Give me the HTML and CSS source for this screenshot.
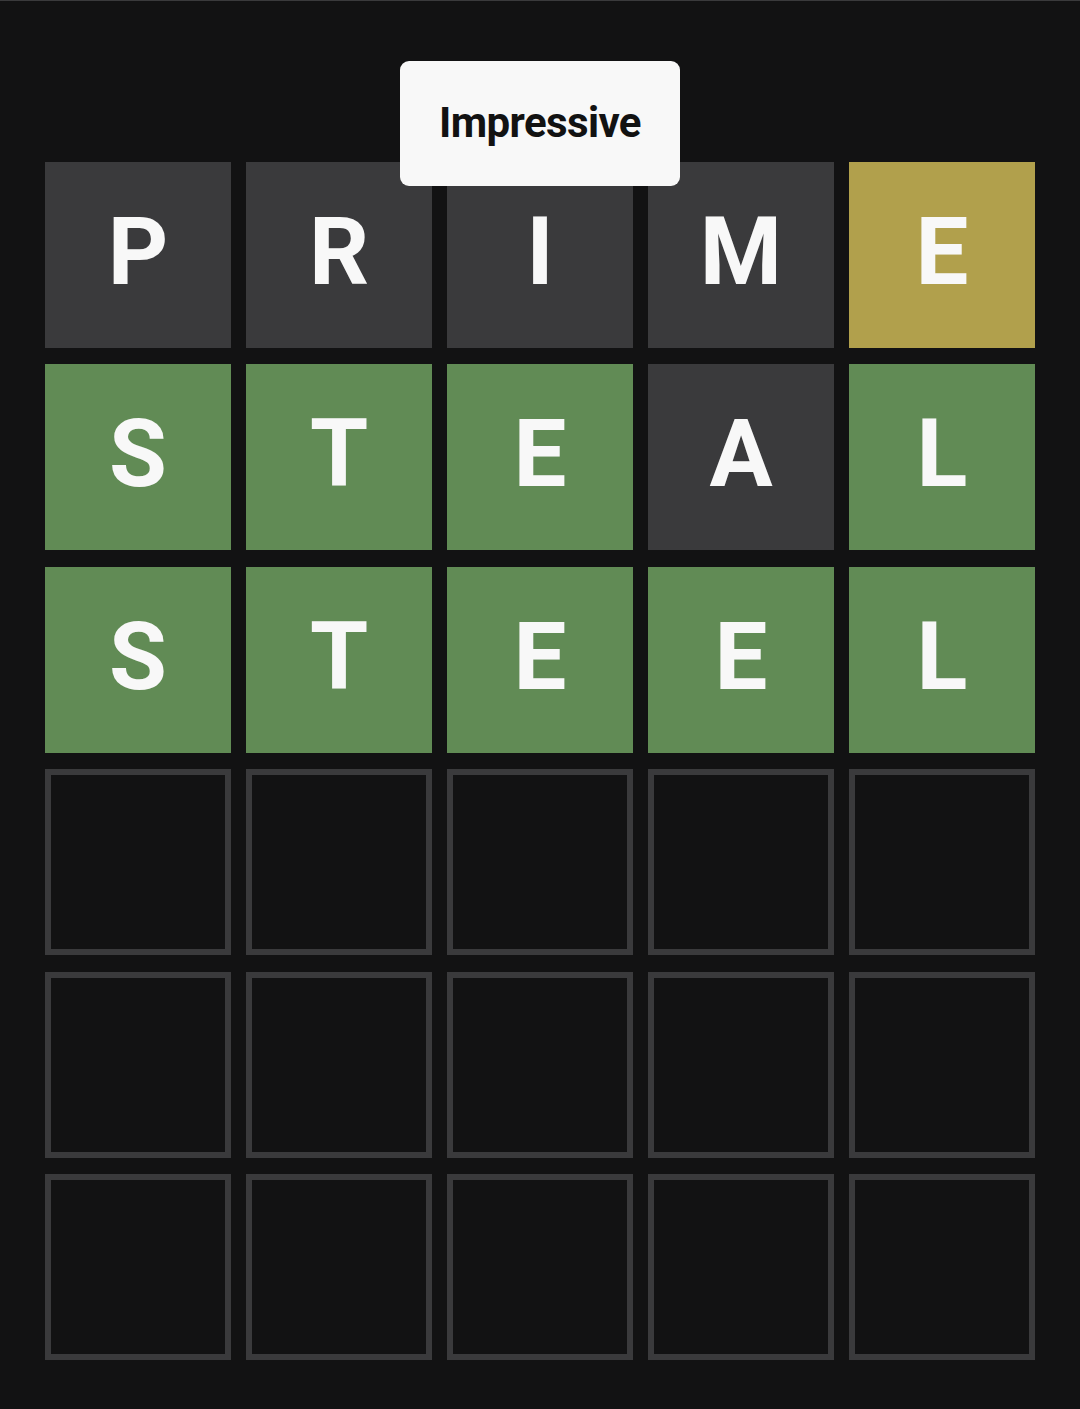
FILE: index.html
```html
<!DOCTYPE html>
<html lang="en">
<head>
<meta charset="utf-8">
<title>Wordle</title>
<link rel="stylesheet" href="styles.css">
</head>
<body>
<main class="page">
  <div class="toast">Impressive</div>
  <div class="board">
    <div class="tile absent">P</div>
    <div class="tile absent">R</div>
    <div class="tile absent">I</div>
    <div class="tile absent">M</div>
    <div class="tile present">E</div>

    <div class="tile correct">S</div>
    <div class="tile correct">T</div>
    <div class="tile correct">E</div>
    <div class="tile absent">A</div>
    <div class="tile correct">L</div>

    <div class="tile correct">S</div>
    <div class="tile correct">T</div>
    <div class="tile correct">E</div>
    <div class="tile correct">E</div>
    <div class="tile correct">L</div>

    <div class="tile empty"></div>
    <div class="tile empty"></div>
    <div class="tile empty"></div>
    <div class="tile empty"></div>
    <div class="tile empty"></div>

    <div class="tile empty"></div>
    <div class="tile empty"></div>
    <div class="tile empty"></div>
    <div class="tile empty"></div>
    <div class="tile empty"></div>

    <div class="tile empty"></div>
    <div class="tile empty"></div>
    <div class="tile empty"></div>
    <div class="tile empty"></div>
    <div class="tile empty"></div>
  </div>
</main>
</body>
</html>
```

FILE: styles.css
```css
html, body {
  margin: 0;
  padding: 0;
  background: #121213;
}

body {
  width: 1080px;
  height: 1409px;
  overflow: hidden;
  border-top: 1px solid #3a3a3c;
  box-sizing: border-box;
  font-family: Roboto, "Liberation Sans", Arial, sans-serif;
}

.page {
  position: relative;
  padding: 161px 45px 0 45px;
}

.toast {
  position: absolute;
  top: 60px;
  left: 400px;
  width: 280px;
  height: 125px;
  box-sizing: border-box;
  background: #f8f8f8;
  border-radius: 9px;
  display: flex;
  align-items: center;
  justify-content: center;
  color: #121212;
  font-family: Roboto, "Liberation Sans", sans-serif;
  font-weight: 700;
  font-size: 42px;
  letter-spacing: -0.6px;
  padding-bottom: 2px;
  z-index: 2;
}

.board {
  display: grid;
  grid-template-columns: repeat(5, 186px);
  grid-template-rows: repeat(6, 186px);
  column-gap: 15px;
  row-gap: 16.4px;
}

.tile {
  box-sizing: border-box;
  display: flex;
  align-items: center;
  justify-content: center;
  color: #f8f8f8;
  font-weight: 700;
  font-size: 94px;
  line-height: 1;
  padding-bottom: 6px;
}

.absent { background: #3a3a3c; }
.present { background: #b1a04c; }
.correct { background: #618b55; }
.empty {
  border: 6px solid #3a3a3c;
  background: transparent;
}
```
